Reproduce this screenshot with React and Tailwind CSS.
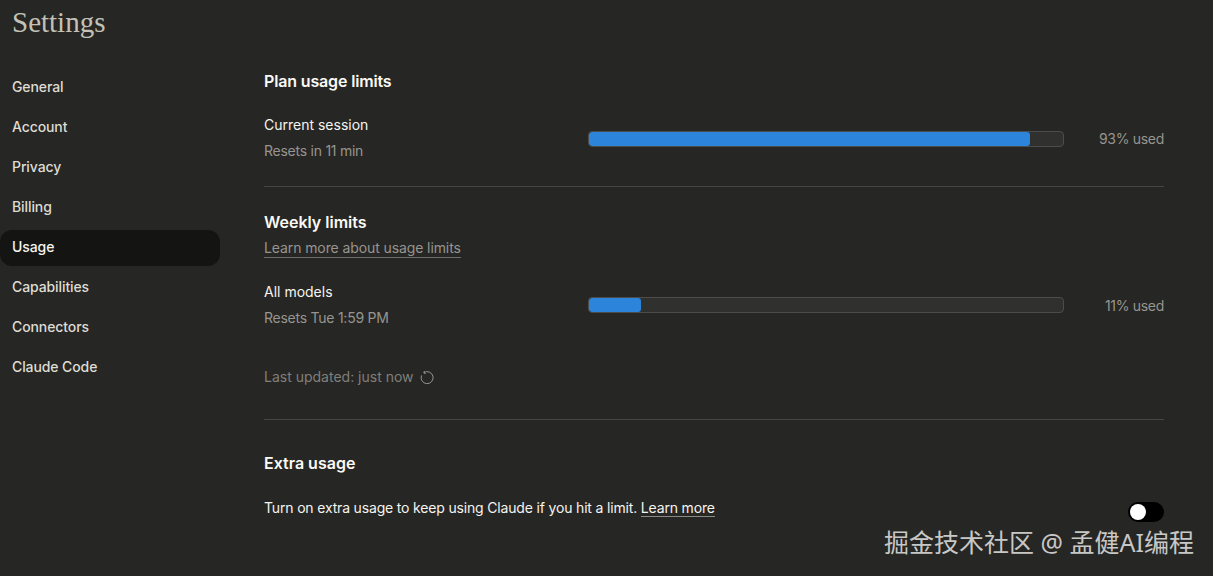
const navItems = ["General", "Account", "Privacy", "Billing", "Usage", "Capabilities", "Connectors", "Claude Code"];

function UsageRow({ label, detail, percent, barOffset }) {
  return (
    <div className="flex items-center">
      <div className="w-[324px] shrink-0">
        <p className="text-[14px] leading-5 text-[#f5f4ef]">{label}</p>
        <p className="mt-1.5 text-[14px] leading-5 tracking-[-0.25px] text-[#96958f]">{detail}</p>
      </div>
      <div className={`h-4 w-[476px] shrink-0 overflow-hidden rounded border border-[#4c4c4a] bg-[#30302e] ${barOffset}`}>
        <div className="h-full rounded-[3px] bg-[#2c84db]" style={{ width: `${percent}%` }} />
      </div>
      <p className="flex-1 text-right text-[14px] tracking-[-0.3px] text-[#96958f]">{percent}% used</p>
    </div>
  );
}

export default function App() {
  return (
    <div className="relative h-[576px] w-[1213px] overflow-hidden bg-[#262624] font-['Inter','Noto_Sans',sans-serif] antialiased">
      <h1 className="pl-3 pt-[6px] font-['Liberation_Serif',serif] text-[29px] leading-8 text-[#c3c2b7]">Settings</h1>

      <div className="mt-[30px] flex">
        {/* Sidebar */}
        <nav className="mt-0.5 flex w-[220px] shrink-0 flex-col gap-1">
          {navItems.map((item) => (
            <div
              key={item}
              className={`flex h-9 items-center rounded-xl px-3 pb-1 text-[14px] font-medium tracking-[-0.1px] ${
                item === "Usage" ? "bg-[#141413] text-[#f5f4ef]" : "text-[#dedcd3]"
              }`}
            >
              {item}
            </div>
          ))}
        </nav>

        {/* Main */}
        <main className="ml-11 w-[900px]">
          <h2 className="mt-px text-[16px] font-semibold leading-6 tracking-[-0.15px] text-[#faf9f5]">Plan usage limits</h2>
          <div className="mt-[22px]">
            <UsageRow label="Current session" detail="Resets in 11 min" percent={93} barOffset="mt-0.5" />
          </div>
          <div className="mt-[25px] h-px bg-[#454543]" />

          <h2 className="mt-[23px] text-[16px] font-semibold leading-6 text-[#faf9f5]">Weekly limits</h2>
          <a className="mt-[4px] block w-fit border-b border-[#6f6e69] text-[14px] leading-[19px] tracking-[-0.1px] text-[#96958f]">
            Learn more about usage limits
          </a>
          <div className="mt-[24px]">
            <UsageRow label="All models" detail="Resets Tue 1:59 PM" percent={11} barOffset="" />
          </div>
          <div className="mt-[39px] flex items-center gap-1.5 text-[14px] leading-5 text-[#807f7a]">
            <span>Last updated: just now</span>
            <svg width="14" height="14" viewBox="0 0 14 14" fill="none" stroke="#96958f" strokeWidth="1" className="mt-px">
              <path d="M4 1.5A6 6 0 1 1 1.5 4.5" />
              <path d="M4.4 0.2 3.8 2 5.6 2.6" />
            </svg>
          </div>
          <div className="mt-[32px] h-px bg-[#454543]" />

          <h2 className="mt-[31px] text-[16px] font-semibold leading-6 text-[#faf9f5]">Extra usage</h2>
          <div className="relative mt-[23px]">
            <p className="text-[14px] leading-5 tracking-[-0.17px] text-[#f5f4ef]">
              Turn on extra usage to keep using Claude if you hit a limit.{" "}
              <a className="border-b border-[#8a8984] text-[#f5f4ef]">Learn more</a>
            </p>
            <div className="absolute right-0 top-[4px] flex h-5 w-9 items-center rounded-full bg-black px-0.5">
              <div className="h-4 w-4 rounded-full bg-white" />
            </div>
          </div>
        </main>
      </div>

      {/* Watermark */}
      <div className="absolute left-[884px] top-[526px] font-['Noto_Sans','Noto_Sans_CJK_SC',sans-serif] text-[25px] leading-8 text-[#c8c8c6]">
        掘金技术社区 @ 孟健AI编程
      </div>
    </div>
  );
}
